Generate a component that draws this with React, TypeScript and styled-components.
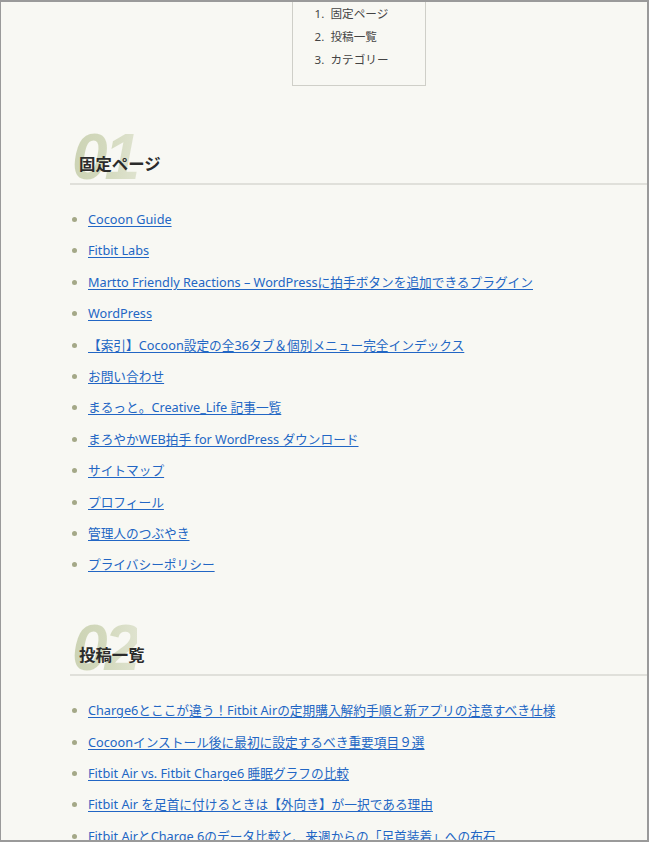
import React from "react";
import styled, { createGlobalStyle } from "styled-components";

const GlobalStyle = createGlobalStyle`
  html, body { margin: 0; padding: 0; }
  body {
    background: #f8f8f3;
    font-family: "Noto Sans", "Noto Sans CJK JP", sans-serif;
    color: #333;
  }
`;

const Frame = styled.div`
  box-sizing: border-box;
  height: 100vh;
  overflow: hidden;
  border-top: 2px solid #9a9a9a;
  border-left: 1px solid #9a9a9a;
  border-right: 2px solid #9a9a9a;
  border-bottom: 2px solid #9a9a9a;
  background: #f8f8f3;
`;

const Content = styled.main`
  padding-left: 69px;
`;

const TocBox = styled.nav`
  box-sizing: border-box;
  width: 134px;
  margin: -10px auto 0;
  border: 1px solid #cfcfc8;
  padding: 9px 0 14px 22px;
`;

const TocList = styled.ol`
  margin: 0;
  padding: 0;
  list-style: none;
  counter-reset: toc;
  font-size: 11.6px;
  line-height: 23px;
  color: #444;
`;

const TocItem = styled.li`
  counter-increment: toc;
  &::before {
    content: counter(toc) ".";
    display: inline-block;
    width: 16px;
  }
`;

const Section = styled.section`
  margin-top: 66px;
  &:first-of-type {
    margin-top: 65px;
  }
`;

const Header = styled.div`
  position: relative;
  padding: 0 0 8px 9px;
  border-bottom: 2px solid #e0e0da;
`;

const Number = styled.span`
  position: absolute;
  left: 2px;
  top: -26px;
  font-family: "Liberation Sans", Arial, sans-serif;
  font-weight: 700;
  font-style: italic;
  font-size: 64px;
  line-height: 1;
  letter-spacing: -3px;
  background: linear-gradient(90deg, #ccd3b4 0%, #d3d9bd 50%, #dfe3cf 100%);
  -webkit-background-clip: text;
  background-clip: text;
  color: transparent;
  user-select: none;
`;

const Title = styled.h2`
  position: relative;
  margin: 0;
  font-size: 16.4px;
  line-height: 24px;
  font-weight: 700;
  color: #2b2b2b;
  font-family: "Noto Sans CJK JP", sans-serif;
`;

const LinkList = styled.ul`
  margin: 23px 0 0;
  padding: 0 0 0 18px;
  list-style: disc outside;
  font-size: 12.7px;
  line-height: 23px;
`;

const LinkItem = styled.li`
  margin-bottom: 8.4px;
  &::marker {
    color: #a4a887;
  }
`;

const Link = styled.a`
  color: #2266c4;
  text-decoration: underline;
  text-underline-offset: 2px;
`;

const pages = [
  "Cocoon Guide",
  "Fitbit Labs",
  "Martto Friendly Reactions – WordPressに拍手ボタンを追加できるプラグイン",
  "WordPress",
  "【索引】Cocoon設定の全36タブ＆個別メニュー完全インデックス",
  "お問い合わせ",
  "まるっと。Creative_Life 記事一覧",
  "まろやかWEB拍手 for WordPress ダウンロード",
  "サイトマップ",
  "プロフィール",
  "管理人のつぶやき",
  "プライバシーポリシー",
];

const posts = [
  "Charge6とここが違う！Fitbit Airの定期購入解約手順と新アプリの注意すべき仕様",
  "Cocoonインストール後に最初に設定するべき重要項目９選",
  "Fitbit Air vs. Fitbit Charge6 睡眠グラフの比較",
  "Fitbit Air を足首に付けるときは【外向き】が一択である理由",
  "Fitbit AirとCharge 6のデータ比較と、来週からの「足首装着」への布石",
];

const sections = [
  { num: "01", title: "固定ページ", items: pages },
  { num: "02", title: "投稿一覧", items: posts },
];

export default function App() {
  return (
    <>
      <GlobalStyle />
      <Frame>
        <Content>
          <TocBox>
            <TocList>
              <TocItem>固定ページ</TocItem>
              <TocItem>投稿一覧</TocItem>
              <TocItem>カテゴリー</TocItem>
            </TocList>
          </TocBox>
          {sections.map((s) => (
            <Section key={s.num}>
              <Header>
                <Number aria-hidden="true">{s.num}</Number>
                <Title>{s.title}</Title>
              </Header>
              <LinkList>
                {s.items.map((t) => (
                  <LinkItem key={t}>
                    <Link href="#">{t}</Link>
                  </LinkItem>
                ))}
              </LinkList>
            </Section>
          ))}
        </Content>
      </Frame>
    </>
  );
}
